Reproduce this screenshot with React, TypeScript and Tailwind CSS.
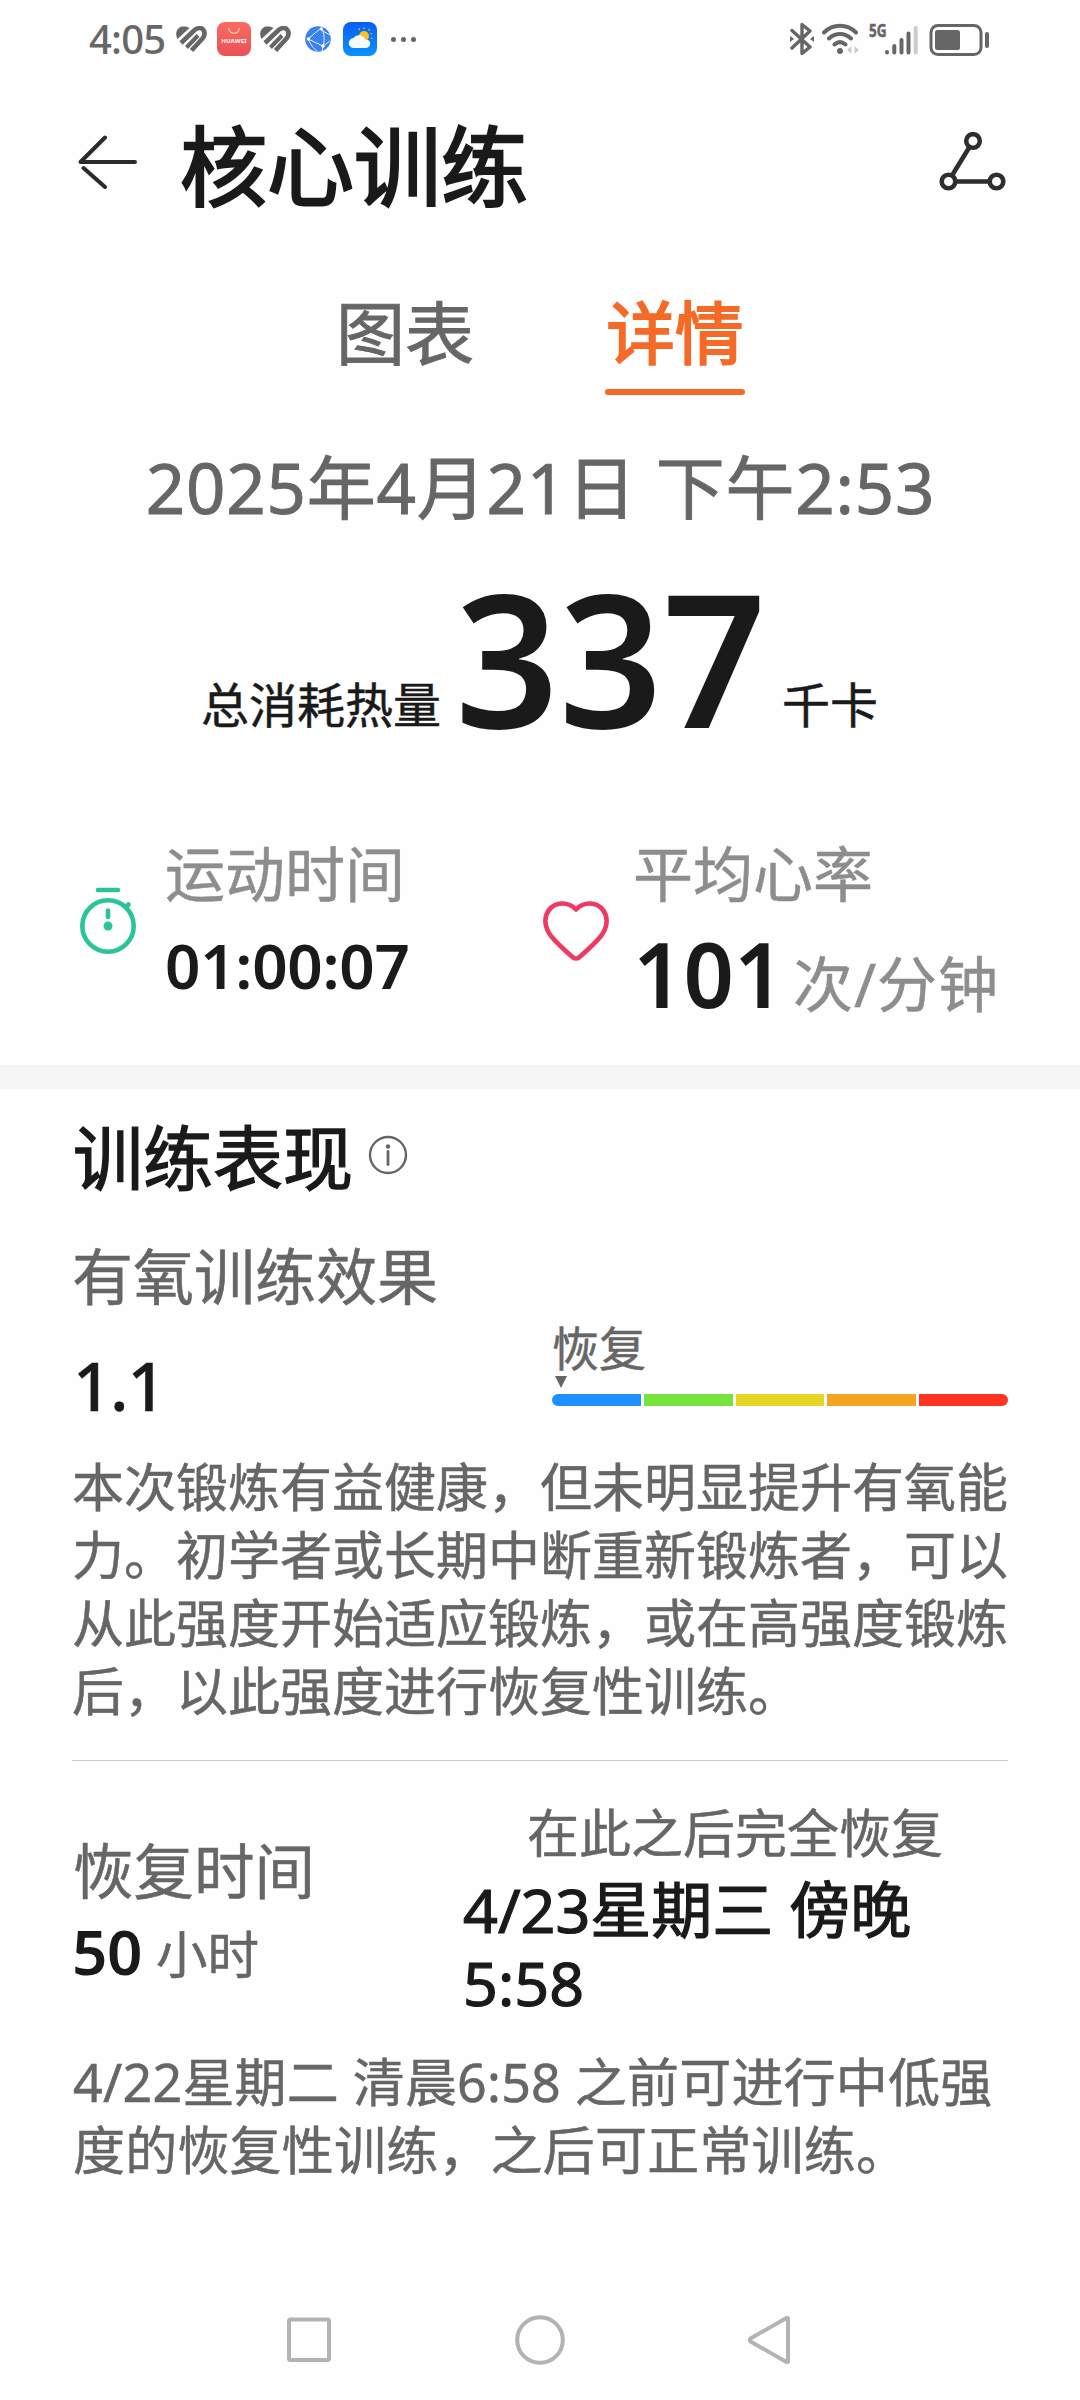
import type { ReactNode } from "react";

const ZONES = [
  "bg-[#1f8fff] rounded-l-full",
  "bg-[#76e23c]",
  "bg-[#e6d523]",
  "bg-[#f5a524]",
  "bg-[#ff3320] rounded-r-full"
];

const HealthIcon = () => (
  <svg className="h-[27px] w-[31px]" viewBox="0 0 31 27" fill="none" stroke="#666" strokeWidth="4.600">
    <path d="M1.500 13C-1.500 8 1 1.500 6 .6C9 0 12 .8 13.500 2Z" fill="#666" stroke="none" />
    <path d="M5 17L17 5.500C21 1.500 25 1 27.200 3.700C29.300 6.500 28.500 10 26.500 12.500L15.500 24.500" />
    <path d="M10.500 21.500L22 9.500" strokeWidth="4" />
  </svg>
);

const StatusBar = () => (
  <div className="flex h-[78px] items-center pl-[89px] pr-[91px] text-[#666]">
    <span className="w-[77px] text-[40px] font-medium leading-[40px] tracking-[-0.8px] [-webkit-text-stroke:0px]">
      4:05
    </span>
    <div className="ml-[10px] flex items-center">
      <HealthIcon />
      <div className="ml-[10px] flex h-[34px] w-[34px] flex-col items-center rounded-[8px] bg-gradient-to-b from-[#fb6b60] to-[#ea5058]">
        <svg className="mt-[6px] h-[6px] w-3" viewBox="0 0 12 6" fill="none" stroke="#ffd9c9" strokeWidth="1.2">
          <path d="M.7 0C1 7 11 7 11.300 0" />
        </svg>
        <span className="mt-[4px] text-[6px] font-bold leading-[7px] tracking-[0.2px] text-white [-webkit-text-stroke:0px]">
          HUAWEI
        </span>
      </div>
      <div className="ml-[9px]">
        <HealthIcon />
      </div>
      <svg className="ml-[14px] h-[26px] w-[26px]" viewBox="0 0 26 26">
        <circle cx="13" cy="13" r="12.800" fill="#3a82ee" />
        <g fill="none" stroke="#e8f2ff" strokeWidth="1">
          <path d="M3 13L16 2M3 13L18 20M3 13C6 19 8 22 12 25M16 1C20 8 20 14 17 25M16 4L25 9M18 20L25 15" />
        </g>
        <g fill="#fff">
          <circle cx="3.500" cy="13" r="1.700" />
          <circle cx="16.500" cy="3" r="1.500" />
          <circle cx="18" cy="20" r="1.700" />
        </g>
      </svg>
      <svg className="ml-[12px] h-[34px] w-[34px]" viewBox="0 0 34 34">
        <defs>
          <linearGradient id="sky" x1="0" y1="0" x2="0" y2="1">
            <stop offset="0" stopColor="#0a5df5" />
            <stop offset="1" stopColor="#0a93fb" />
          </linearGradient>
        </defs>
        <rect width="34" height="34" rx="8" fill="url(#sky)" />
        <circle cx="21" cy="14" r="5" fill="#fdc21c" />
        <path
          d="M16.500 8L16 6.500M21 7V5.500M25.500 8.500L26.500 7M27.500 12L29 11.500M28 16L29.500 16.500"
          stroke="#fdc21c"
          strokeWidth="1.300"
        />
        <path d="M11 26a5 5 0 0 1-.5-10a6.500 6.500 0 0 1 11.500 1.500a4.300 4.300 0 1 1 1 8.500z" fill="#f7faff" />
      </svg>
      <div className="ml-[14px] flex gap-[5px]">
        <i className="h-[5px] w-[5px] rounded-full bg-[#666]" />
        <i className="h-[5px] w-[5px] rounded-full bg-[#666]" />
        <i className="h-[5px] w-[5px] rounded-full bg-[#666]" />
      </div>
    </div>
    <div className="ml-auto flex items-center">
      <svg className="h-[34px] w-[24px]" viewBox="0 0 24 34" fill="none" stroke="#666" strokeWidth="3.400" strokeLinejoin="round" strokeLinecap="round">
        <path d="M2 8.500L20 25L12 31.500V2.500L20 9L2 26" />
        <path d="M0 14v6l4-3zM24 14v6l-4-3z" fill="#666" stroke="none" />
      </svg>
      <svg className="ml-[8px] h-[32px] w-[38px]" viewBox="0 0 38 32" fill="none" stroke="#666" strokeWidth="4" strokeLinecap="round">
        <path d="M2 9.500C11 .5 25 .5 34 9.500M7 15.500C13.500 9.500 22.500 9.500 29 15.500M12.500 21.500C16 18.500 20 18.500 23.500 21.500" />
        <circle cx="18" cy="28" r="3" fill="#666" stroke="none" />
        <path d="M29.500 23v8l-4.500-4zM32.500 23v8l4.500-4z" fill="#ccc" stroke="none" />
      </svg>
      <div className="ml-[9px] flex h-[34px] items-start">
        <span className="w-[16px] origin-left scale-x-[0.8] text-[17px] font-bold leading-[18px]">5G</span>
        <svg className="h-[34px] w-[33px]" viewBox="0 0 33 34" stroke="#666" strokeWidth="4" strokeLinecap="round">
          <path d="M2 30v.5M9.300 24v6.500M16.500 18v12.500M23.500 11.500v19" />
          <path d="M30.700 6v24.500" stroke="#ccc" />
        </svg>
      </div>
      <svg className="ml-[11px] h-[34px] w-[60px]" viewBox="0 0 60 34">
        <rect x="2" y="3.500" width="50" height="29" rx="7" fill="none" stroke="#666" strokeWidth="3" />
        <rect x="6" y="8" width="25" height="20" rx="2.500" fill="#666" />
        <path d="M58 12v12" stroke="#666" strokeWidth="4" strokeLinecap="round" />
      </svg>
    </div>
  </div>
);

const Header = () => (
  <div className="flex h-[176px] items-center pl-[78px] pr-[74px]">
    <svg className="-mt-2 h-[54px] w-[60px]" viewBox="0 0 60 54" fill="none" stroke="#2b2b2b" strokeWidth="4" strokeLinecap="round">
      <path d="M57 27H2.500L27 2.500" strokeLinejoin="round" />
      <path d="M5.500 33L27 52" />
    </svg>
    <h1 className="ml-[42px] text-[87px] leading-[88px] [-webkit-text-stroke:2.4px]">核心训练</h1>
    <svg className="-mt-2 ml-auto h-[60px] w-[67px]" viewBox="0 0 67 60" fill="none" stroke="#2e2e2e" strokeWidth="4.600">
      <circle cx="34" cy="9" r="6.800" />
      <circle cx="9.500" cy="49.500" r="6.800" />
      <circle cx="57.500" cy="49.500" r="6.800" />
      <path d="M30.500 15L13 43.500M16.500 49.500H50.500" />
    </svg>
  </div>
);

type StatProps = {
  icon: ReactNode;
  label: string;
  children: ReactNode;
};

const Stat = ({ icon, label, children }: StatProps) => (
  <div className="flex">
    {icon}
    <div className="flex flex-col">
      <span className="text-[60px] leading-[60px] text-[#8d8d8d]">{label}</span>
      {children}
    </div>
  </div>
);

const Summary = () => (
  <section className="flex flex-col">
    <div className="flex pl-[336px] pt-[39px]">
      <div className="w-[140px] text-[69px] leading-[80px] text-[#666] [-webkit-text-stroke:0.9px]">图表</div>
      <div className="ml-[129px] w-[140px] text-center text-[#f56a26]">
        <div className="text-[68.5px] leading-[80px] [-webkit-text-stroke:2px]">详情</div>
        <div className="mt-[16px] h-[6px] rounded-full bg-[#f56a26]" />
      </div>
    </div>
    <p className="mt-[52px] whitespace-nowrap pl-px text-center text-[69px] leading-[80px] tracking-[0.8px] text-[#666] [-webkit-text-stroke:0.9px]">
      2025年4月21日 下午2:53
    </p>
    <div className="mt-[36px] flex items-baseline pl-[201px]">
      <span className="w-[243px] -translate-y-[5px] text-[48px] leading-[48px]">总消耗热量</span>
      <span className="ml-[11px] w-[320px] origin-left scale-x-[0.98] text-[185px] font-semibold leading-[186px] [-webkit-text-stroke:0px]">
        337
      </span>
      <span className="ml-[7px] -translate-y-[5px] text-[48px] leading-[48px]">千卡</span>
    </div>
    <div className="mt-[95px] grid grid-cols-[463px_1fr] pl-[80px]">
      <Stat
        label="运动时间"
        icon={
          <svg className="mr-[28px] mt-[43px] h-[68px] w-[57px]" viewBox="0 0 57 68" fill="none" stroke="#2bc49a" strokeWidth="4.600" strokeLinecap="round">
            <circle cx="28" cy="39" r="25.700" />
            <path d="M18 3h20M46 20l2.500-2.500M28 23.500v6.500" />
            <circle cx="28" cy="39" r="4.500" fill="#2bc49a" stroke="none" />
          </svg>
        }
      >
        <span className="mt-[31px] text-[62px] font-semibold leading-[60px] tracking-[-0.3px] [-webkit-text-stroke:0px]">
          01:00:07
        </span>
      </Stat>
      <Stat
        label="平均心率"
        icon={
          <svg className="mr-[24px] mt-[57px] h-[61px] w-[66px]" viewBox="0 0 66 61" fill="none" stroke="#ee3a60" strokeWidth="4.600" strokeLinejoin="round">
            <path d="M33 8.500C25 0 12 1 6 9C0 17 2 27 8 35C14 42.500 22 49.500 30 56.500Q33 58.500 36 56.500C44 49.500 52 42.500 58 35C64 27 66 17 60 9C54 1 41 0 33 8.500Z" />
          </svg>
        }
      >
        <div className="mt-[24px] flex items-baseline whitespace-nowrap">
          <span className="w-[160px] origin-left scale-x-[0.98] text-[90px] font-semibold leading-[90px] [-webkit-text-stroke:0px]">
            101
          </span>
          <span className="-translate-y-px text-[60px] leading-[60px] tracking-[0.9px] text-[#8d8d8d]">次/分钟</span>
        </div>
      </Stat>
    </div>
  </section>
);

const Performance = () => (
  <section className="px-[72px] pt-[34px]">
    <div className="flex items-center">
      <h2 className="pl-px text-[70px] leading-[70px] [-webkit-text-stroke:1.4px]">训练表现</h2>
      <svg className="-mt-1.5 ml-[15px] h-[40px] w-[40px]" viewBox="0 0 40 40" fill="none" stroke="#666" strokeWidth="2.400">
        <circle cx="20" cy="20" r="18" />
        <path d="M20 16.500v13" strokeWidth="2.800" strokeLinecap="round" />
        <circle cx="20" cy="11.500" r="2.200" fill="#666" stroke="none" />
      </svg>
    </div>
    <div className="mt-[54px] text-[61px] leading-[60px] text-[#666]">有氧训练效果</div>
    <div className="mt-[17px] flex justify-between">
      <div className="pl-px pt-[28px] text-[67px] font-medium leading-[66px] tracking-[-1px]">1.1</div>
      <div className="w-[456px]">
        <div className="text-[47px] leading-[48px] text-[#666]">恢复</div>
        <svg className="ml-[3px] mt-[4px] h-[12px] w-[12px]" viewBox="0 0 12 12">
          <path d="M0 0h12L6 12z" fill="#666" />
        </svg>
        <div className="mt-[6px] flex h-[12px] gap-[3px]">
          {ZONES.map(zone => (
            <div key={zone} className={`flex-1 ${zone}`} />
          ))}
        </div>
      </div>
    </div>
    <p className="mt-[35px] w-[940px] text-[52px] leading-[68px] text-[#666]">
      本次锻炼有益健康，但未明显提升有氧能力。初学者或长期中断重新锻炼者，可以从此强度开始适应锻炼，或在高强度锻炼后，以此强度进行恢复性训练。
    </p>
    <div className="mt-[35px] h-px bg-[#ccc]" />
  </section>
);

const Recovery = () => (
  <section className="px-[72px] pt-[46px]">
    <div className="flex">
      <div className="w-[391px] pt-[34px]">
        <div className="pl-px text-[60.5px] leading-[60px] text-[#666]">恢复时间</div>
        <div className="mt-[20px] flex items-baseline">
          <span className="w-[84px] text-[62px] font-semibold leading-[60px] tracking-[-0.5px] [-webkit-text-stroke:0px]">
            50
          </span>
          <span className="-translate-y-px text-[51.5px] leading-[60px] text-[#666]">小时</span>
        </div>
      </div>
      <div className="w-[544px]">
        <div className="text-center text-[52px] leading-[52px] text-[#666]">在此之后完全恢复</div>
        <div className="mt-[14px] text-[61px] leading-[73px] [-webkit-text-stroke:1.2px]">
          <div>4/23星期三 傍晚</div>
          <div>5:58</div>
        </div>
      </div>
    </div>
    <p className="mt-[29px] whitespace-nowrap pl-px text-[52px] leading-[68.3px] tracking-[0.2px] text-[#666]">
      4/22星期二 清晨6:58 之前可进行中低强
      <br />
      度的恢复性训练，之后可正常训练。
    </p>
  </section>
);

const NavBar = () => (
  <div className="mt-auto flex h-[120px] items-center pl-[286px] text-[#b3b3b3]">
    <svg className="h-[50px] w-[46px]" viewBox="0 0 46 50" fill="none" stroke="currentColor" strokeWidth="4">
      <rect x="3" y="4.500" width="40" height="40.500" rx="1.500" />
    </svg>
    <svg className="ml-[183px] h-[50px] w-[50px]" viewBox="0 0 50 50" fill="none" stroke="currentColor" strokeWidth="4">
      <circle cx="25" cy="25" r="22.800" />
    </svg>
    <svg className="ml-[182px] h-[50px] w-[45px]" viewBox="0 0 45 50" fill="none" stroke="currentColor" strokeWidth="4" strokeLinejoin="round">
      <path d="M41 3.500V46.500Q40.500 47.500 39.500 47L3.500 26.500Q2 25 3.500 23.500L39.500 3Q40.500 2.500 41 3.500Z" />
    </svg>
  </div>
);

export default function App() {
  return (
    <div className="flex h-[2400px] w-[1080px] flex-col overflow-hidden bg-[#fefefe] font-['Noto_Sans','Noto_Sans_CJK_SC',sans-serif] text-[#1a1a1a] [-webkit-text-stroke:0.5px]">
      <StatusBar />
      <Header />
      <Summary />
      <div className="mt-[47px] h-[24px] bg-[#f6f6f6]" />
      <Performance />
      <Recovery />
      <NavBar />
    </div>
  );
}
